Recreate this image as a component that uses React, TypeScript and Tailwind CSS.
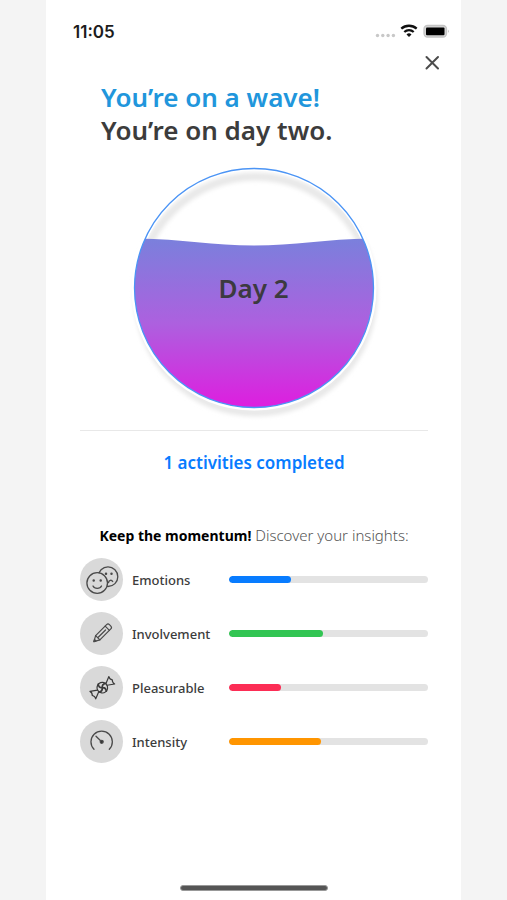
import type { ReactNode } from "react";

const stroke = {
  fill: "none",
  stroke: "#4a4a4a",
  strokeWidth: 1.3,
  strokeLinecap: "round" as const,
  strokeLinejoin: "round" as const,
};

function EmotionsIcon() {
  return (
    <svg viewBox="0 0 43 43" className="size-full" aria-hidden="true" {...stroke}>
      <circle cx="28" cy="18.700" r="9.800" />
      <circle cx="26" cy="15.800" r="0.600" fill="#4a4a4a" />
      <circle cx="31.500" cy="15.800" r="0.600" fill="#4a4a4a" />
      <path d="M28.500 24.500c.6-2.600 3-3 4.200-1" />
      <circle cx="17.200" cy="25" r="10.300" fill="#d9d9d9" />
      <circle cx="13.700" cy="22.500" r="0.600" fill="#4a4a4a" />
      <circle cx="20.700" cy="22.500" r="0.600" fill="#4a4a4a" />
      <path d="M13 28c1.500 3.200 7 3.200 8.500 0" />
    </svg>
  );
}

function PencilIcon() {
  return (
    <svg viewBox="0 0 43 43" className="size-full" aria-hidden="true" {...stroke} strokeWidth={1.2}>
      <g transform="translate(22 21.500) rotate(-45)">
        <path d="M-11.500 0L-6-3H9.500Q11.500-3 11.500-1V1Q11.500 3 9.500 3H-6z" />
        <path d="M-6-3V3M7.500-3V3M-6 0H5" />
        <path d="M-11.500 0l2-1.100v2.200z" fill="#4a4a4a" />
      </g>
    </svg>
  );
}

function CandyIcon() {
  return (
    <svg viewBox="0 0 43 43" className="size-full" aria-hidden="true" {...stroke} stroke="#3a3a3a" strokeWidth={1.2}>
      <g transform="translate(22.300 21.700) rotate(-38)">
        <circle r="5.300" />
        <path d="M0 0Q-3-2-1-5.200M0 0Q2-3 5-1.500M0 0Q3 2 1 5.200M0 0Q-2 3-5 1.500" strokeWidth="1.700" />
        <path d="M5.300-1L12-4.700Q10.800-2.300 12.700 0Q10.800 2.300 12 4.700L5.300 1" />
        <path d="M-5.300-1L-12-4.700Q-10.800-2.300-12.700 0Q-10.800 2.300-12 4.700L-5.300 1" />
      </g>
    </svg>
  );
}

function GaugeIcon() {
  return (
    <svg viewBox="0 0 43 43" className="size-full" aria-hidden="true" {...stroke}>
      <path d="M14 29.300A10.700 10.700 0 1 1 29.300 29.300" />
      <path d="M16 16.200l5.700 5.500" />
      <circle cx="21.700" cy="21.800" r="1.500" fill="#333" />
    </svg>
  );
}

type Insight = { label: string; value: number; fill: string; icon: ReactNode };

const insights: Insight[] = [
  { label: "Emotions", value: 31, fill: "bg-[#087cff]", icon: <EmotionsIcon /> },
  { label: "Involvement", value: 47, fill: "bg-[#32c553]", icon: <PencilIcon /> },
  { label: "Pleasurable", value: 26, fill: "bg-[#fc2d55]", icon: <CandyIcon /> },
  { label: "Intensity", value: 46, fill: "bg-[#ff9500]", icon: <GaugeIcon /> },
];

function StatusBar() {
  return (
    <div className="flex h-6 items-center justify-between pr-[11px] pl-[27px]">
      <span className="font-['Inter',sans-serif] text-[17px] leading-6 font-semibold text-[#1c1c1c]">11:05</span>
      <svg viewBox="0 0 76 16" className="h-4 w-[76px]" aria-hidden="true">
        <g fill="#c8c8c8">
          <circle cx="3.500" cy="11.500" r="1.700" />
          <circle cx="8.800" cy="11.500" r="1.700" />
          <circle cx="14.100" cy="11.500" r="1.700" />
          <circle cx="19.400" cy="11.500" r="1.700" />
        </g>
        <g fill="none" stroke="#111" strokeWidth="2.300">
          <path d="M27.300 4.700a11.500 11.500 0 0 1 15.400 0" />
          <path d="M30.300 8a7 7 0 0 1 9.400 0" />
        </g>
        <path d="M32.500 10.400a3.800 3.800 0 0 1 5 0L35 13z" fill="#111" />
        <rect x="50" y="1.500" width="22.500" height="11.500" rx="3.500" fill="#d6d6d6" stroke="#c4c4c4" strokeWidth="1.300" />
        <rect x="52" y="3.400" width="18.500" height="7.800" rx="1" fill="#000" />
        <path d="M74 5.500q1.500 1.700 0 3.500z" fill="#aaa" />
      </svg>
    </div>
  );
}

function DayCircle() {
  return (
    <div className="relative mx-auto mt-5 size-[242px]">
      <svg viewBox="0 0 242 242" className="size-full overflow-visible" aria-hidden="true">
        <defs>
          <linearGradient id="water" x1="0" y1="0" x2="0" y2="1">
            <stop offset="0" stopColor="#7a80dc" />
            <stop offset="0.500" stopColor="#ad60df" />
            <stop offset="1" stopColor="#df1cdf" />
          </linearGradient>
          <clipPath id="bowl">
            <circle cx="121" cy="121" r="119.500" />
          </clipPath>
          <filter id="soft" x="-10%" y="-10%" width="120%" height="120%">
            <feGaussianBlur stdDeviation="2" />
          </filter>
        </defs>
        <circle cx="122.500" cy="127.500" r="118" fill="none" stroke="#e8e8e8" strokeWidth="8" filter="url(#soft)" />
        <circle cx="121" cy="121" r="120" fill="none" stroke="#fff" strokeWidth="5" />
        <path d="M0 71.500C45 71.500 80 78.500 121 78.500S197 71.500 242 71.500V242H0z" fill="url(#water)" clipPath="url(#bowl)" />
        <circle cx="121" cy="121" r="119.500" fill="none" stroke="#4b94f5" strokeWidth="1.300" />
      </svg>
      <p className="absolute inset-0 flex items-center justify-center text-[26px] font-semibold text-[#3c3a40]">Day 2</p>
    </div>
  );
}

export default function App() {
  return (
    <div className="min-h-screen bg-[#f4f4f4] font-['Noto_Sans','Open_Sans',sans-serif]">
      <main className="mx-auto flex min-h-screen max-w-[415px] flex-col bg-white pt-5">
        <StatusBar />
        <div className="mt-2 flex justify-end pr-[19px]">
          <button type="button" aria-label="Close" className="flex size-5 items-center justify-center">
            <svg viewBox="0 0 20 20" className="size-5" fill="none" stroke="#4c4c4c" strokeWidth="2" strokeLinecap="round" aria-hidden="true">
              <path d="M4.500 5l11.500 11.500M16 5L4.500 16.500" />
            </svg>
          </button>
        </div>
        <h1 className="mt-[9px] pl-[55px] text-[26px] leading-[33px] font-semibold text-[#3c3c3c]">
          <span className="block text-[#2196dc]">You’re on a wave!</span>
          You’re on day two.
        </h1>
        <DayCircle />
        <div className="pr-[33px] pl-[34px]">
          <hr className="mt-[21px] border-[#e8e8e8]" />
          <p className="mt-5 text-center text-[17px] leading-6 font-semibold text-[#087cff]">1 activities completed</p>
          <h2 className="mt-12 text-center text-[15px] leading-6 font-light text-[#555]">
            <strong className="text-sm font-bold text-black">Keep the momentum!</strong> Discover your insights:
          </h2>
          <ul className="mt-[11px] flex flex-col gap-[11px]">
            {insights.map(({ label, value, fill, icon }) => (
              <li key={label} className="flex items-center">
                <span className="size-[43px] shrink-0 rounded-full bg-[#d9d9d9]">{icon}</span>
                <span className="ml-[9px] w-[97px] shrink-0 text-[13px] leading-5 font-medium text-[#3c3c3c]">{label}</span>
                <div
                  role="progressbar"
                  aria-label={label}
                  aria-valuenow={value}
                  aria-valuemin={0}
                  aria-valuemax={100}
                  className="h-[7px] flex-1 overflow-hidden rounded-full bg-[#e3e3e3]"
                >
                  <div className={`h-full rounded-full ${fill}`} style={{ width: `${value}%` }} />
                </div>
              </li>
            ))}
          </ul>
        </div>
        <div className="mx-auto mt-auto mb-[9px] h-[6px] w-[148px] rounded-full border border-[#999] bg-[#555]" />
      </main>
    </div>
  );
}
